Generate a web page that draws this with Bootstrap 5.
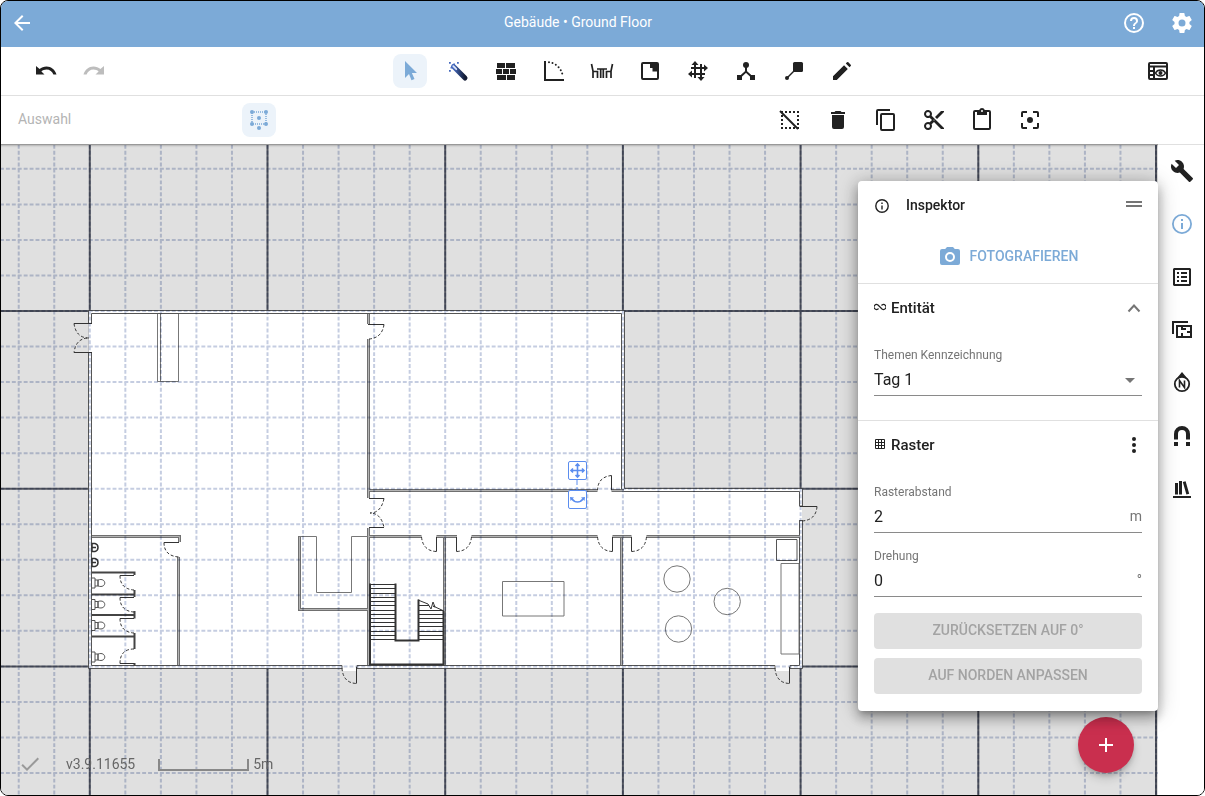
<!DOCTYPE html>
<html lang="de">
<head>
<meta charset="utf-8">
<meta name="viewport" content="width=device-width, initial-scale=1">
<title>Gebäude • Ground Floor</title>
<link rel="stylesheet" href="https://cdn.jsdelivr.net/npm/bootstrap@5.3.0/dist/css/bootstrap.min.css">
<style>
:root{--accent:#7caad7;--ink:#212121;--line:#e0e0e0}
body{font-family:Roboto,"Liberation Sans",sans-serif;font-size:14px;line-height:20px;color:var(--ink);background:#fff}
svg{display:block}
.app-frame{border:1px solid #000;border-radius:8px;overflow:hidden}
.app-bar{background:var(--accent);height:46px;padding:0 10px 2px 9px}
.app-bar h1{font-size:14px;line-height:20px;font-weight:400;padding-bottom:2px}
.tool-row{height:49px;border-bottom:1px solid var(--line)}
.tool-main{padding:0 22px 0 21px}
.cell{width:48px;display:flex;justify-content:center}
.tool-btn{width:34px;height:34px;padding:5px;border:0;border-radius:8px;background:none;color:var(--ink)}
.tool-btn.on{background:#ecf3fa;color:var(--accent)}
.tool-btn.info{color:var(--accent)}
.tool-btn:disabled{color:#bdbdbd}
.sub-label{width:217px;color:#b4b4b4;margin-left:17px;padding:0 0 2px}
.sub-actions{margin-right:150px}
.stage{background:#e0e0e0;z-index:1;box-shadow:0 -1px 0 #999,inset 0 2px 2px -1px rgba(0,0,0,.2)}
.side{width:46px;gap:19px;padding:9px 0 0 2px}
.inspector{top:36px;right:0;width:300px;background:#fff;border-radius:4px;z-index:2;box-shadow:0 5px 5px -3px rgba(0,0,0,.2),0 8px 10px 1px rgba(0,0,0,.14),0 3px 14px 2px rgba(0,0,0,.12),0 2px 22px rgba(0,0,0,.22)}
.inspector section{padding:0 16px;border-top:1px solid var(--line)}
.inspector h2,.inspector h3{font-size:14px;line-height:20px;font-weight:500;margin:0}
.inspector h3{font-size:15px}
.insp-head{height:48px;padding:0 12px}
.photo-row{padding:9px 0}
.photo-btn{height:36px;color:var(--accent);font-weight:500;font-size:14px;border:0;background:none;gap:8px;display:flex;align-items:center}
.sec-head{height:48px;gap:5px}
.field-label{font-size:12px;line-height:16px;color:#757575;display:block}
.sec-entity .field-label{margin-top:15px}
.sec-raster .field-label:first-of-type{margin-top:15px}
.sec-end{height:9px}
.field-box{border-bottom:1px solid #8a8a8a;height:33px;color:#757575;position:relative;margin-bottom:15px}
.field-box input,.field-box select{border:0;background:none;padding:2px 0 0;font-size:16px;line-height:24px;width:100%;color:var(--ink);appearance:none;outline:0}
.caret{position:absolute;right:7px;top:15px;border:5px solid transparent;border-top-color:#757575;border-bottom:0;pointer-events:none}
.btn-stack{display:flex;flex-direction:column;gap:9px;padding:1px 0 17px}
.flat-btn{height:36px;border:0;border-radius:4px;background:var(--line);color:#a3a3a3;font-weight:500;width:100%;padding:0 0 2px}
.fab{right:24px;bottom:22px;width:56px;height:56px;padding:16px;border:0;border-radius:50%;background:#c92f4e;color:#fff;box-shadow:0 3px 5px -1px rgba(0,0,0,.2),0 6px 10px rgba(0,0,0,.14)}
.status{left:17px;bottom:21px;color:#666;height:20px}
.scale-bar{width:91px;height:12px;border:2px solid #888;border-top:0;margin:2px 4px 0 23px}
.handle-pt{position:absolute;left:566px;top:316px}
#minor{mix-blend-mode:multiply}
</style>
</head>
<body>
<div class="app-frame d-flex flex-column vh-100">
<header class="app-bar d-flex align-items-center justify-content-between">
  <a href="#" class="text-white" aria-label="Zurück"><svg width="24" height="24" viewBox="0 0 24 24" fill="currentColor"><path d="M20 11H7.83l5.59-5.59L12 4l-8 8 8 8 1.41-1.41L7.83 13H20z"/></svg></a>
  <h1 class="text-white m-0">Gebäude • Ground Floor</h1>
  <div class="d-flex gap-4 text-white">
    <a href="#" class="text-white" aria-label="Hilfe"><svg width="24" height="24" viewBox="0 0 24 24" fill="currentColor"><path d="M11 18h2v-2h-2zm1-16a10 10 0 1 0 0 20 10 10 0 0 0 0-20m0 18a8 8 0 1 1 0-16 8 8 0 0 1 0 16m0-14a4 4 0 0 0-4 4h2a2 2 0 1 1 4 0c0 2-3 1.750-3 5h2c0-2.250 3-2.500 3-5a4 4 0 0 0-4-4"/></svg></a>
    <a href="#" class="text-white" aria-label="Einstellungen"><svg width="24" height="24" viewBox="0 0 24 24" fill="currentColor"><path d="M12 15.500A3.500 3.500 0 0 1 8.500 12 3.500 3.500 0 0 1 12 8.500a3.500 3.500 0 0 1 3.500 3.500 3.500 3.500 0 0 1-3.500 3.500m7.430-2.530c.040-.320.070-.640.070-.970s-.030-.660-.070-1l2.110-1.630c.190-.150.240-.420.120-.640l-2-3.460c-.120-.220-.390-.310-.610-.220l-2.490 1c-.520-.390-1.060-.730-1.690-.980l-.370-2.650A.506.506 0 0 0 14 2h-4c-.250 0-.460.180-.500.420l-.370 2.650c-.630.250-1.170.590-1.690.980l-2.490-1c-.220-.090-.490 0-.610.220l-2 3.460c-.130.220-.070.490.120.640L4.570 11c-.040.340-.070.670-.070 1s.030.650.070.970l-2.110 1.660c-.190.150-.250.420-.120.640l2 3.460c.120.220.390.300.610.220l2.490-1.010c.520.400 1.060.740 1.690.990l.370 2.650c.040.240.250.420.500.420h4c.250 0 .460-.180.500-.420l.370-2.650c.630-.260 1.170-.590 1.690-.990l2.490 1.010c.220.080.490 0 .610-.220l2-3.460c.120-.220.070-.490-.120-.640z"/></svg></a>
  </div>
</header>
<nav class="tool-row tool-main d-flex align-items-center justify-content-between" aria-label="Werkzeuge">
  <div class="d-flex">
    <span class="cell"><button class="tool-btn" aria-label="Rückgängig"><svg viewBox="0 0 24 24" fill="currentColor"><path d="M12.500 7.500c-2.650 0-5.050.990-6.900 2.600L2 7v8.500h8.500l-3.120-3.120c1.390-1.160 3.160-1.880 5.120-1.880 3.240 0 5.850 2 6.900 5h3.100c-1.420-4.970-5.350-8-10-8"/></svg></button></span>
    <span class="cell"><button class="tool-btn" disabled aria-label="Wiederholen"><svg viewBox="0 0 24 24" fill="currentColor"><path d="M11.500 7.500c2.650 0 5.050.990 6.900 2.600L22 7v8.500h-8.500l3.120-3.120c-1.390-1.160-3.160-1.880-5.120-1.880-3.240 0-5.850 2-6.900 5H1.500c1.420-4.970 5.350-8 10-8"/></svg></button></span>
  </div>
  <div class="d-flex">
    <span class="cell"><button class="tool-btn on" aria-label="Auswahl"><svg viewBox="0 0 24 24" fill="currentColor"><path d="M7 2v17l4-4 2.500 6.200 3-1.200-2.600-6H19z"/></svg></button></span>
    <span class="cell"><button class="tool-btn" aria-label="Assistent"><svg viewBox="0 0 24 24"><defs><linearGradient id="wand"><stop stop-color="#4569bd"/><stop offset="1" stop-color="#131b33"/></linearGradient></defs><path d="M7.500 7.500 19 19" stroke="url(#wand)" stroke-width="5" stroke-linecap="round"/><path d="m7.300 7.200 3 3" stroke="#dce5fa" stroke-width="1.800" stroke-linecap="round"/><path d="M3 3h1.800v1.800H3zM7.500 4.500H9v1.500H7.500zM11 3h1.800v1.800H11zM4.500 8H6v1.500H4.500zM3 11h1.800v1.800H3z" fill="#4569bd"/></svg></button></span>
    <span class="cell"><button class="tool-btn" aria-label="Wand"><svg viewBox="0 0 24 24" fill="currentColor"><path d="M3 4h8v5H3zM12 4h9v5h-9zM2 10h6v5H2zM9 10h6v5H9zM16 10h6v5h-6zM3 16h9v5H3zM13 16h8v5h-8z"/></svg></button></span>
    <span class="cell"><button class="tool-btn" aria-label="Tür"><svg viewBox="0 0 24 24" fill="none" stroke="currentColor" stroke-width="2"><path d="M3 2v19h19"/><path d="M7 3.200A16 16 0 0 1 20.800 18" stroke-linecap="round" stroke-dasharray="0 3.650"/></svg></button></span>
    <span class="cell"><button class="tool-btn" aria-label="Möbel"><svg viewBox="0 0 24 24" fill="none" stroke="currentColor" stroke-width="1.700"><path d="m1.500 5 1.500 7v7M3 12.500h4.500V19M22.500 5 21 12v7M21 12.500h-4.500V19M7 10h10M10.700 10v9M13.300 10v9"/></svg></button></span>
    <span class="cell"><button class="tool-btn" aria-label="Raum"><svg viewBox="0 0 24 24" fill="currentColor"><path fill-rule="evenodd" d="M5 3h14a2 2 0 0 1 2 2v14a2 2 0 0 1-2 2H5a2 2 0 0 1-2-2V5a2 2 0 0 1 2-2m0 2v14h14v-6.500h-4.500V9H12V5z"/></svg></button></span>
    <span class="cell"><button class="tool-btn" aria-label="Raster"><svg viewBox="0 0 24 24" fill="none" stroke="currentColor" stroke-width="2"><path d="M9 4v15M15 5v15M5 9h16M3 15h16"/><path fill="currentColor" stroke="none" d="m9 2-3.500 4h7zM15 22l-3.500-4h7zM22 9l-4-3.500v7zM2 15l4-3.500v7z"/></svg></button></span>
    <span class="cell"><button class="tool-btn" aria-label="Verzweigung"><svg viewBox="0 0 24 24" fill="currentColor"><circle cx="12" cy="6" r="3"/><path d="M3 16h5v5H3zM16 16h5v5h-5z"/><path d="M12 8v5M5.500 18.500 12 12.500l6.500 6" fill="none" stroke="currentColor" stroke-width="2"/></svg></button></span>
    <span class="cell"><button class="tool-btn" aria-label="Hinweis"><svg viewBox="0 0 24 24" fill="currentColor"><rect x="11" y="3" width="10" height="10" rx="1.500"/><circle cx="5" cy="19" r="2"/><path d="m5 19 8-8" stroke="currentColor" stroke-width="1.400"/></svg></button></span>
    <span class="cell"><button class="tool-btn" aria-label="Stift"><svg viewBox="0 0 24 24" fill="currentColor"><path d="M3 17.250V21h3.750L17.810 9.940l-3.750-3.750zM20.710 7.040a1 1 0 0 0 0-1.410l-2.340-2.340a1 1 0 0 0-1.410 0L15.800 4.450l3.750 3.750z"/></svg></button></span>
  </div>
  <span class="cell"><button class="tool-btn" aria-label="Ansicht"><svg viewBox="0 0 24 24" fill="none" stroke="currentColor" stroke-width="2"><rect x="3" y="4" width="18" height="16" rx="1"/><path d="M3 7.500h18M8 8v12M3 12h5M3 16h5"/><path stroke-width="1.500" d="M9.500 14c2-4 8-4 10 0-2 4-8 4-10 0z"/><circle cx="14.500" cy="14" r="1" /></svg></button></span>
</nav>
<div class="tool-row d-flex align-items-center">
  <span class="sub-label">Auswahl</span>
  <span class="cell"><button class="tool-btn on" aria-label="Rahmenauswahl"><svg viewBox="0 0 24 24" fill="currentColor"><path d="M5 4h14v12H5z" fill="none" stroke="currentColor" stroke-width="1.500" stroke-dasharray="1 1"/><circle cx="5" cy="4" r="2"/><circle cx="19" cy="4" r="2"/><circle cx="5" cy="16" r="2"/><circle cx="19" cy="16" r="2"/><circle cx="12" cy="10" r="2"/><circle cx="12" cy="20" r="2"/></svg></button></span>
  <div class="sub-actions d-flex ms-auto">
    <span class="cell"><button class="tool-btn" aria-label="Auswahl aufheben"><svg viewBox="0 0 24 24" fill="none" stroke="currentColor" stroke-width="2"><path d="M4 4h16v16H4z" stroke-dasharray="2 2" stroke-dashoffset="1"/><path d="m2 3 18 18"/></svg></button></span>
    <span class="cell"><button class="tool-btn" aria-label="Löschen"><svg viewBox="0 0 24 24" fill="currentColor"><path d="M6 19a2 2 0 0 0 2 2h8a2 2 0 0 0 2-2V7H6zM19 4h-3.500l-1-1h-5l-1 1H5v2h14z"/></svg></button></span>
    <span class="cell"><button class="tool-btn" aria-label="Kopieren"><svg viewBox="0 0 24 24" fill="currentColor"><path d="M16 1H4a2 2 0 0 0-2 2v14h2V3h12zm3 4H8a2 2 0 0 0-2 2v14a2 2 0 0 0 2 2h11a2 2 0 0 0 2-2V7a2 2 0 0 0-2-2m0 16H8V7h11z"/></svg></button></span>
    <span class="cell"><button class="tool-btn" aria-label="Ausschneiden"><svg viewBox="0 0 24 24" fill="currentColor"><path d="M9.640 7.640A4 4 0 1 0 7.640 9.640L10 12l-2.360 2.360a4 4 0 1 0 2 2L12 14l7 7h3v-1zM6 8a2 2 0 1 1 0-4 2 2 0 0 1 0 4m0 12a2 2 0 1 1 0-4 2 2 0 0 1 0 4m6-7.500a.5.5 0 1 1 0-1 .5.5 0 0 1 0 1M19 3l-6 6 2 2 7-7V3z"/></svg></button></span>
    <span class="cell"><button class="tool-btn" aria-label="Einfügen"><svg viewBox="0 0 24 24" fill="currentColor"><path d="M19 2h-4.180a3 3 0 0 0-5.640 0H5a2 2 0 0 0-2 2v16a2 2 0 0 0 2 2h14a2 2 0 0 0 2-2V4a2 2 0 0 0-2-2m-7 0a1 1 0 1 1 0 2 1 1 0 0 1 0-2m7 18H5V4h2v3h10V4h2z"/></svg></button></span>
    <span class="cell"><button class="tool-btn" aria-label="Zentrieren"><svg viewBox="0 0 24 24" fill="currentColor"><path d="M5 15H3v4a2 2 0 0 0 2 2h4v-2H5zM5 5h4V3H5a2 2 0 0 0-2 2v4h2zm14-2h-4v2h4v4h2V5a2 2 0 0 0-2-2m0 16h-4v2h4a2 2 0 0 0 2-2v-4h-2zM12 9a3 3 0 1 0 0 6 3 3 0 0 0 0-6"/></svg></button></span>
  </div>
</div>
<div class="d-flex flex-grow-1 work-area">
<main class="stage flex-grow-1 position-relative">
  <svg id="plan" class="position-absolute w-100 h-100" role="img" aria-label="Grundriss">
    <g transform="translate(-1 -145)" fill="none">
      <g id="major" stroke="#53565f" stroke-width="2"></g>
      <path fill="#fff" d="M89 311H624.500V488.500H802V668.500H89zM342 666h15v5h-15zM775 666h15v5h-15z"/>
      <!-- outer shell -->
      <g stroke="#555" stroke-width="1">
        <path d="M88.500 323V310.500H624.500V488.500H802.500V506M802.500 521V668.500H790M775 668.500H357M342 668.500H88.500V352M91.500 323V313.500H621.500V490M91.500 352V665.500H342M357 665.500H775M790 665.500H799.500V521M799.500 506V491.500H622M342 665.500v3M357 665.500v3M775 665.500v3M790 665.500v3M799 506h4M799 520.500h4"/>
      </g>
      <!-- inner walls -->
      <path stroke="#707070" stroke-width="3" d="M368.500 314V324M368.500 339V498M368.500 528V665M369 490.500H597.500M611.500 490.500H624M369 536.500H421.500M436.500 536.500H457M471.500 536.500H597.500M612.500 536.500H631.500M646.500 536.500H800M444.500 538V665M621.500 538V665M92 536.500H179.500V542M178.500 557V665M299.500 536V609.500H368"/>
      <path stroke="#b4b4b4" stroke-width="1" d="M368.500 314V324M368.500 339V498M368.500 528V665M369 490.500H597.500M611.500 490.500H624M369 536.500H421.500M436.500 536.500H457M471.500 536.500H597.500M612.500 536.500H631.500M646.500 536.500H800M444.500 538V665M621.500 538V665M92 536.500H179.500V542M178.500 557V665M299.500 536V609.500H368"/>
      <g stroke="#444" stroke-width="2"><path d="M92 572.500H134.500V575M134.500 590V594.500H92M134.500 594V597M134.500 611V615H92M134.500 614.500V618.500M134.500 633V636.500H92M134.500 636V649M134.500 663V666"/></g>
      <!-- door leaves and swings -->
      <path stroke="#333" d="M92 323.500H74M92 352.500H74M368 324.500H384M369 498.500H384M369 527.500H384M356.500 667V683.500M789.500 667V683.500M800 506.500H817M611.500 490V475.500M436.500 537V551.500M456.500 537V551.500M612.500 537V551.500M631.500 537V551.500M179 542.500H164M134 575.500H120M134 597.500H120M134 618.500H120M134 663.500H120"/>
      <path stroke="#333" stroke-dasharray="3 2" d="M74 323.500Q76 338 89 338Q76 338 74 352.500M384 324.500Q382 338 369 339M384 498.500Q381 513 370 513Q381 513 384 527.500M342 668Q343 683 356.500 683.500M775 668Q776 683 789.500 683.500M817 506.500Q816 520 802 521M611.500 475.500Q598 477 597.500 490M421.500 537Q423 551 436.500 551.500M471.500 537Q470 551 456.500 551.500M597.500 537Q599 551 612.500 551.500M646.500 537Q645 551 631.500 551.500M164 542.500Q164 556 179 557M120 575.500Q120 589 134 590M120 597.500Q120 611 134 612M120 618.500Q120 632 134 633M120 663.500Q120 649 134 649"/>
      <!-- furniture -->
      <g stroke="#777"><path d="M157.500 314V381.500H178.500V314M160.500 314V381M299 536.500H316.500V592.500H351.500V536.500H368"/><path d="M502.500 581.500h61.500v34.500h-61.500zM781 563.500h18v90.500h-18z"/><path stroke="#555" d="M776.500 539.500h20.500v21h-20.500z"/><circle cx="677" cy="579" r="13.200"/><circle cx="727.200" cy="601.500" r="13.200"/><circle cx="678.500" cy="629" r="13.200"/></g>
      <!-- sanitary fittings -->
      <g stroke="#555"><path id="wc" d="M92 578h3v10h-3M95 580h3v6h-3M98 580c9-3 9 9 0 6z"/><use href="#wc" y="21.500"/><use href="#wc" y="42.500"/><use href="#wc" y="74"/><path stroke-width="1.500" stroke="#333" d="M92 543.500h3c4 1 4 7 0 8h-3zM92 558.500h3c4 1 4 7 0 8h-3zM92 547.500h4M92 562.500h4"/></g>
      <!-- staircase -->
      <g stroke="#333"><path d="M370 584.500h25M370 588.500h25M370 593.500h25M370 597.500h25M370 601.500h25M370 605.500h25M370 610.500h25M370 614.500h25M370 618.500h25M370 622.500h25M370 626.500h25M370 631.500h25M370 635.500h25M370 639.500h25M418 605.500h11M418 610.500h25M418 614.500h25M418 618.500h25M418 622.500h25M418 626.500h25M418 631.500h25M418 635.500h25M418 639.500h25"/><path stroke-width="2" d="M370 583.500V664.500H443.500V611M395.500 583.500V640.500H418.500V599.500"/><path d="m418 600 10 4 3 5 2-7 2 5-2-1 11 5"/></g>
      <g id="minor" stroke="#c5cde1" stroke-width="2" stroke-dasharray="3.900 2.024"></g>
    </g>
  </svg>
  <svg class="handle-pt" width="20" height="49" viewBox="0 0 20 49" fill="#fff" stroke="#5b8def" aria-hidden="true"><path d="M10 19v12" stroke-dasharray="5 2"/><rect x="1.500" y=".5" width="18" height="18" rx="1.500"/><rect x="1.500" y="29.500" width="18" height="18" rx="1.500"/><path fill="none" stroke-width="1.600" d="M10.500 3v13M4 9.500h13M8.500 5l2-2 2 2M8.500 14l2 2 2-2M6 7.500l-2 2 2 2M15 7.500l2 2-2 2M5 38c3 4 8 4 11 0"/><path fill="#5b8def" stroke="none" d="M3 36l4 .5-3.500 3.500zM18 36l-4 .5 3.500 3.500z"/></svg>
  <div class="status position-absolute d-flex align-items-center"><svg width="24" height="24" viewBox="0 0 24 24" fill="#999"><path d="M9 16.200 4.800 12l-1.400 1.400L9 19 21 7l-1.400-1.400z"/></svg><span class="ps-4">v3.9.11655</span><span class="scale-bar"></span><span>5m</span></div>
  <button class="fab position-absolute" aria-label="Hinzufügen"><svg width="24" height="24" viewBox="0 0 24 24" fill="currentColor"><path d="M19 13h-6v6h-2v-6H5v-2h6V5h2v6h6z"/></svg></button>
  <aside class="inspector position-absolute">
    <div class="insp-head d-flex align-items-center">
      <svg width="24" height="24" viewBox="0 0 24 24" fill="none" stroke="currentColor" stroke-width="1.400"><circle cx="12" cy="13" r="6.200"/><path d="M12 12.500v4M12 9.500V11"/></svg>
      <h2 class="ps-2 ms-1 me-auto">Inspektor</h2>
      <svg width="24" height="24" viewBox="0 0 24 24" fill="#757575"><path d="M4 8h16v2H4zM4 12h16v2H4z"/></svg>
    </div>
    <div class="photo-row d-flex justify-content-center"><button class="photo-btn"><svg width="24" height="24" viewBox="0 0 24 24" fill="currentColor"><path fill-rule="evenodd" d="M9 3 7.200 5H4a2 2 0 0 0-2 2v12a2 2 0 0 0 2 2h16a2 2 0 0 0 2-2V7a2 2 0 0 0-2-2h-3.200L15 3zm3 5a5 5 0 1 1 0 10 5 5 0 0 1 0-10"/><circle cx="12" cy="13" r="3"/></svg>FOTOGRAFIEREN</button></div>
    <section class="sec-entity">
      <div class="sec-head d-flex align-items-center"><svg width="12" height="12" viewBox="0 0 24 24" fill="none" stroke="currentColor" stroke-width="2.500"><path d="m9 13-1 1a5 5 0 1 1 0-8l8 8a5 5 0 1 0 0-8l-1 1"/></svg><h3 class="me-auto">Entität</h3><svg width="16" height="16" viewBox="0 0 16 16" fill="none" stroke="#757575" stroke-width="2"><path d="m2.500 11.500 5.500-6 5.500 6"/></svg></div>
      <label class="field-label" for="tag">Themen Kennzeichnung</label>
      <div class="field-box d-flex align-items-center"><select id="tag"><option>Tag 1</option></select><span class="caret"></span></div>
      <div class="sec-end"></div>
    </section>
    <section class="sec-raster">
      <div class="sec-head d-flex align-items-center"><svg width="12" height="12" viewBox="0 0 12 12" fill="none" stroke="currentColor"><path d="M1.500.500h9v9h-9zM1.500 3.500h9M1.500 6.500h9M4.500.500v9M7.500.500v9"/></svg><h3 class="me-auto">Raster</h3><svg width="16" height="16" viewBox="0 0 16 16" fill="currentColor"><circle cx="8" cy="2" r="2"/><circle cx="8" cy="8" r="2"/><circle cx="8" cy="14" r="2"/></svg></div>
      <label class="field-label" for="dist">Rasterabstand</label>
      <div class="field-box d-flex align-items-center"><input id="dist" type="text" value="2"><span>m</span></div>
      <label class="field-label" for="rot">Drehung</label>
      <div class="field-box d-flex align-items-center"><input id="rot" type="text" value="0"><span>°</span></div>
      <div class="btn-stack">
        <button class="flat-btn" disabled>ZURÜCKSETZEN AUF 0°</button>
        <button class="flat-btn" disabled>AUF NORDEN ANPASSEN</button>
      </div>
    </section>
  </aside>
</main>
<nav class="side d-flex flex-column align-items-center bg-white flex-shrink-0" aria-label="Seitenleiste">
  <button class="tool-btn" aria-label="Werkzeug"><svg viewBox="0 0 24 24" fill="currentColor"><path d="m22.700 19-9.100-9.100c.900-2.300.400-5-1.500-6.900-2-2-5-2.400-7.400-1.300L9 6 6 9 1.600 4.700C.400 7.100.900 10.100 2.900 12.100c1.900 1.900 4.600 2.400 6.900 1.500l9.100 9.100c.400.400 1 .4 1.400 0l2.300-2.300c.500-.400.500-1.100.1-1.400"/></svg></button>
  <button class="tool-btn info" aria-label="Info"><svg viewBox="0 0 24 24" fill="currentColor"><path d="M11 7h2v2h-2zm0 4h2v6h-2zm1-9a10 10 0 1 0 0 20 10 10 0 0 0 0-20m0 18.200a8.200 8.200 0 1 1 0-16.400 8.200 8.200 0 0 1 0 16.400"/></svg></button>
  <button class="tool-btn" aria-label="Liste"><svg viewBox="0 0 24 24" fill="currentColor"><path fill-rule="evenodd" d="M4 3h16l1 1v16l-1 1H4l-1-1V4zm1 2v14h14V5z"/><path d="M7 7h2v2H7zM11 7h6v2h-6zM7 11h2v2H7zM11 11h6v2h-6zM7 15h2v2H7zM11 15h6v2h-6z"/></svg></button>
  <button class="tool-btn" aria-label="Ebenen"><svg viewBox="0 0 24 24" fill="none" stroke="currentColor" stroke-width="2"><path d="M3 16V4h15M7 8h14v11H7zM12 19v-4M12 8v3h4M21 14h-4"/></svg></button>
  <button class="tool-btn" aria-label="Norden"><svg viewBox="0 0 24 24" fill="none" stroke="currentColor" stroke-width="1.800"><circle cx="12" cy="13" r="7.200"/><path d="M9.500 16.500v-7l5 7v-7" stroke-width="1.600"/><path fill="currentColor" stroke="none" d="m12 1-5 6q5-2 10 0z"/></svg></button>
  <button class="tool-btn" aria-label="Magnet"><svg viewBox="0 0 24 24" fill="none" stroke="currentColor" stroke-width="4"><path d="M6 15.500V10a6 6 0 0 1 12 0v5.500M6 18v4M18 18v4"/></svg></button>
  <button class="tool-btn" aria-label="Bibliothek"><svg viewBox="0 0 24 24" fill="currentColor"><path d="M3 19h18v2H3zM5 6h3v11.500H5zM9 4h3v13.500H9zM12.800 5l2.800-.800 3.600 12.600-2.800.8z"/></svg></button>
</nav>
</div>
</div>
<script src="https://cdn.jsdelivr.net/npm/bootstrap@5.3.0/dist/js/bootstrap.bundle.min.js"></script>
<script>
// Two-metre grid with a heavier line on every fifth division.
(function () {
  const step = 35.54, ox = 89.8, oy = 311, ns = 'http://www.w3.org/2000/svg';
  const minor = document.getElementById('minor'), major = document.getElementById('major');
  function line(parent, x1, y1, x2, y2) {
    const l = document.createElementNS(ns, 'line');
    l.setAttribute('x1', x1); l.setAttribute('y1', y1);
    l.setAttribute('x2', x2); l.setAttribute('y2', y2);
    parent.appendChild(l);
  }
  function draw() {
    minor.replaceChildren(); major.replaceChildren();
    const w = document.getElementById('plan').clientWidth + 2;
    const h = document.getElementById('plan').clientHeight + 146;
    for (let i = -4; ox + i * step < w; i++) {
      const x = ox + i * step;
      line(minor, x, 133, x, h);
      if (i % 5 === 0) line(major, x, 133, x, h);
    }
    for (let j = -5; oy + j * step < h; j++) {
      const y = oy + j * step;
      line(minor, 0, y, w, y);
      if (j % 5 === 0) line(major, 0, y, w, y);
    }
  }
  draw();
  addEventListener('resize', draw);
})();
</script>
</body>
</html>
